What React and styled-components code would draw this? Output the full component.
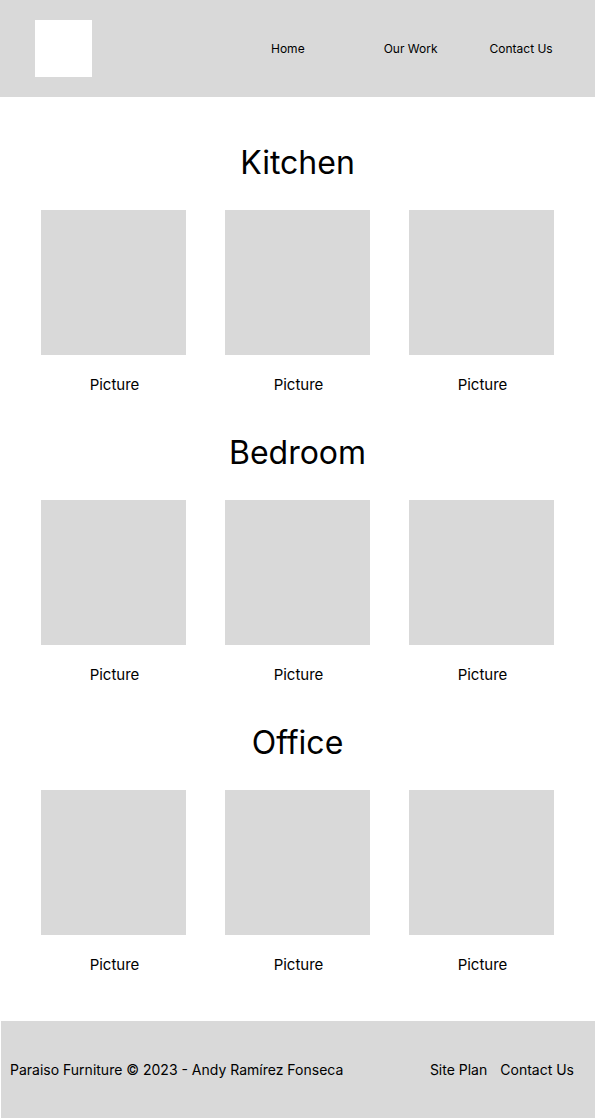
import React from 'react';
import styled, { createGlobalStyle } from 'styled-components';

const GlobalStyle = createGlobalStyle`
  body {
    margin: 0;
    font-family: Inter, "Noto Sans", sans-serif;
    color: #000;
    background: #fff;
  }
`;

const sections = ['Kitchen', 'Bedroom', 'Office'];

const App = () => (
  <>
    <GlobalStyle />
    <Header>
      <Logo />
      <Nav>
        <NavLink $ml={0}>Home</NavLink>
        <NavLink $ml={79}>Our Work</NavLink>
        <NavLink $ml={52}>Contact Us</NavLink>
      </Nav>
    </Header>
    <Main>
      {sections.map((title) => (
        <Section key={title}>
          <Title>{title}</Title>
          <Grid>
            {[0, 1, 2].map((i) => (
              <Item key={i}>
                <Picture />
                <Caption>Picture</Caption>
              </Item>
            ))}
          </Grid>
        </Section>
      ))}
    </Main>
    <Footer>
      <FooterText>Paraiso Furniture © 2023 - Andy Ramírez Fonseca</FooterText>
      <FooterLinks>
        <FooterText>Site Plan</FooterText>
        <FooterText>Contact Us</FooterText>
      </FooterLinks>
    </Footer>
  </>
);

export default App;

const Header = styled.header`
  height: 97px;
  background: #d9d9d9;
  display: flex;
  align-items: center;
  padding-left: 35px;
`;

const Logo = styled.div`
  width: 57px;
  height: 57px;
  background: #fff;
`;

const Nav = styled.nav`
  display: flex;
  margin-left: 179px;
`;

const NavLink = styled.span`
  font-size: 12px;
  line-height: 16px;
  margin-left: ${(p) => p.$ml}px;
`;

const Main = styled.main`
  padding-top: 46px;
  display: flex;
  flex-direction: column;
  gap: 38px;
`;

const Section = styled.section`
  display: flex;
  flex-direction: column;
  align-items: center;
`;

const Title = styled.h2`
  margin: 0 0 27px;
  font-size: 32px;
  font-weight: 400;
  line-height: 40px;
`;

const Grid = styled.div`
  display: grid;
  grid-template-columns: repeat(3, 145px);
  column-gap: 39px;
`;

const Item = styled.div`
  display: flex;
  flex-direction: column;
  align-items: center;
`;

const Picture = styled.div`
  width: 145px;
  height: 145px;
  background: #d9d9d9;
`;

const Caption = styled.div`
  margin-top: 20px;
  padding-left: 2px;
  font-size: 15px;
  line-height: 20px;
`;

const Footer = styled.footer`
  margin: 46px 0 0 1px;
  height: 97px;
  background: #d9d9d9;
  display: flex;
  align-items: center;
  justify-content: space-between;
  padding: 0 21px 0 9px;
`;

const FooterText = styled.span`
  font-size: 14px;
  line-height: 18px;
`;

const FooterLinks = styled.div`
  display: flex;
  gap: 13px;
`;
